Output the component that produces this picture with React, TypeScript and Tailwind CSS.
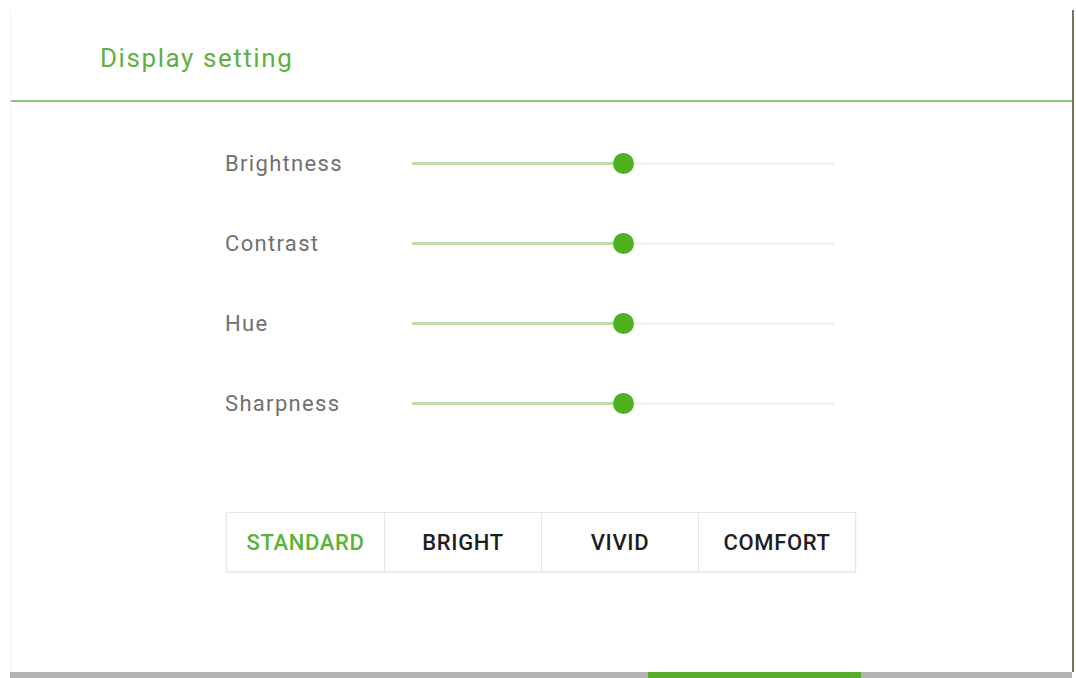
import React from "react";

const sliders = [
  { label: "Brightness", value: 50 },
  { label: "Contrast", value: 50 },
  { label: "Hue", value: 50 },
  { label: "Sharpness", value: 50 },
];

const modes = ["STANDARD", "BRIGHT", "VIVID", "COMFORT"];

function SliderRow({ label, value }: { label: string; value: number }) {
  return (
    <div className="flex items-center h-[80px]">
      <div className="w-[187px] text-[22px] tracking-[0.06em] text-[#707070]">{label}</div>
      <div className="relative w-[423px] h-[20px] flex items-center">
        <div className="flex w-full h-[3px]">
          <div className="h-full bg-[#b9dea8]" style={{ width: `${value}%` }} />
          <div className="h-full flex-1 bg-[#f1f4ee]" />
        </div>
        <div
          className="absolute top-0 w-[21px] h-[21px] -ml-[11px] rounded-full bg-[#4fb021]"
          style={{ left: `${value}%` }}
        />
      </div>
    </div>
  );
}

export default function App() {
  const active = "STANDARD";
  return (
    <div
      className="w-[1076px] h-[678px] bg-white flex flex-col overflow-hidden"
      style={{ fontFamily: "Roboto, 'Liberation Sans', sans-serif" }}
    >
      <div className="flex-1 flex pt-[10px] pl-[10px]">
        <div className="flex-1 flex flex-col border-l border-[#f2f2f2] border-r-2 border-r-[#6f7a5c]">
          {/* header */}
          <div className="h-[90px] flex items-center pl-[89px] pt-[6px]">
            <span className="text-[26px] tracking-[0.06em] text-[#5fb043]">Display setting</span>
          </div>
          <div className="h-[2px] bg-[#88c777]" />

          {/* sliders */}
          <div className="flex flex-col pt-[21px] pl-[214px]">
            {sliders.map((s) => (
              <SliderRow key={s.label} label={s.label} value={s.value} />
            ))}
          </div>

          {/* picture modes */}
          <div className="flex pl-[215px] pt-[69px]">
            <div className="flex border border-[#e6e6e6] shadow-[0_1px_2px_rgba(0,0,0,0.08)]">
              {modes.map((m, i) => (
                <button
                  key={m}
                  className={`w-[157px] h-[58px] flex items-center justify-center text-[22px] font-medium tracking-[0.03em] ${
                    i > 0 ? "border-l border-[#e6e6e6]" : ""
                  } ${m === active ? "text-[#5ab33a]" : "text-[#1e1e1e]"}`}
                >
                  {m}
                </button>
              ))}
            </div>
          </div>
        </div>
        <div className="w-[2px]" />
      </div>

      {/* bottom indicator bar */}
      <div className="h-[6px] flex pl-[10px] pr-[4px]">
        <div className="w-[638px] bg-[#b3b3b3]" />
        <div className="w-[213px] bg-[#58ad2c]" />
        <div className="flex-1 bg-[#b3b3b3]" />
      </div>
    </div>
  );
}
